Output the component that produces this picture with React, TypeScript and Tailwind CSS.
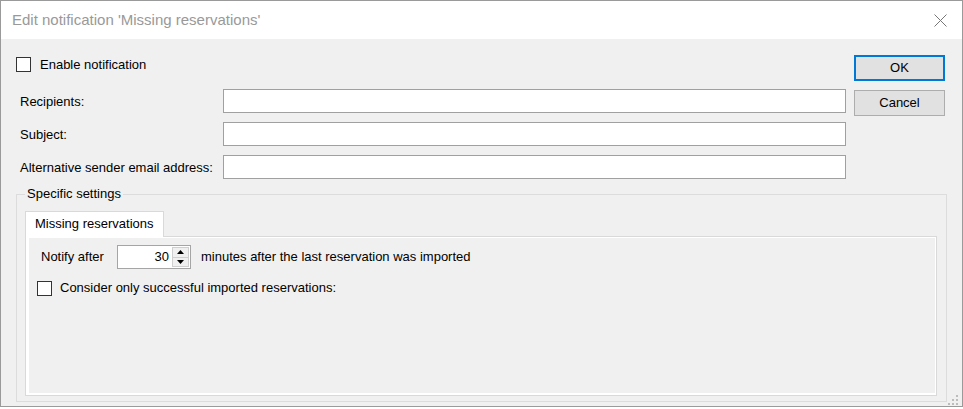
import React from 'react'

function CheckBox() {
  return <div className="w-[15px] h-[15px] border border-[#333333] bg-white shrink-0" />
}

function SpinBox({ value }: { value: number }) {
  return (
    <div className="w-[74px] h-[24px] border border-[#a5a5a5] bg-white flex items-stretch">
      <div className="flex-1 flex items-center justify-end pr-[3px] text-black">{value}</div>
      <div className="w-[18px] flex flex-col py-[1px] pr-[1px]">
        <div className="flex-1 border border-[#cfcfcf] bg-[#f0f0f0] flex items-center justify-center">
          <svg width="7" height="4" viewBox="0 0 7 4"><path d="M3.5 0 L7 4 L0 4 Z" fill="#000" /></svg>
        </div>
        <div className="flex-1 border border-t-0 border-[#cfcfcf] bg-[#f0f0f0] flex items-center justify-center">
          <svg width="7" height="4" viewBox="0 0 7 4"><path d="M0 0 L7 0 L3.5 4 Z" fill="#000" /></svg>
        </div>
      </div>
    </div>
  )
}

export default function App() {
  const fields = ['Recipients:', 'Subject:', 'Alternative sender email address:']

  return (
    <div className="w-[963px] h-[409px] bg-white text-[13px] leading-[16px] text-black font-['Liberation_Sans',Arial,sans-serif]">
      <div className="relative h-[407px] border border-[#9a9a9a] flex flex-col">
        {/* title bar */}
        <div className="h-[38px] bg-white flex items-center justify-between pl-[11px] pr-[15px]">
          <span className="text-[15px] text-[#999999]">Edit notification 'Missing reservations'</span>
          <svg width="13" height="13" viewBox="0 0 13 13">
            <path d="M0.5 0.5 L12.5 12.5 M12.5 0.5 L0.5 12.5" stroke="#777" strokeWidth="1" />
          </svg>
        </div>

        <div className="flex-1 bg-[#f0f0f0] px-[15px] pt-[16px] flex flex-col">
          <div className="flex">
            <div className="w-[830px] flex flex-col">
              <div className="mt-[1px] h-[16px] flex items-center gap-[9px]">
                <CheckBox />
                <span className="pt-[1px]">Enable notification</span>
              </div>
              <div className="mt-[17px] flex flex-col gap-[9px]">
                {fields.map((f) => (
                  <div key={f} className="h-[24px] flex items-center">
                    <label className="w-[207px] pl-[4px] pt-[1px]">{f}</label>
                    <input className="flex-1 h-[24px] border border-[#a0a0a0] bg-white outline-none" />
                  </div>
                ))}
              </div>
            </div>
            <div className="ml-[8px] w-[91px] flex flex-col gap-[9px]">
              <button className="h-[26px] border-2 border-[#0078d7] bg-[#e1e1e1]">OK</button>
              <button className="h-[26px] border border-[#adadad] bg-[#e1e1e1]">Cancel</button>
            </div>
          </div>

          {/* group box */}
          <fieldset className="mt-[7px] border border-[#dcdcdc] pl-[8px] pr-[9px] pt-[9px] pb-[5px]">
            <legend className="px-[2px] leading-[16px]">Specific settings</legend>
            <div className="relative z-10 -mb-[1px] w-fit h-[26px] border border-b-0 border-[#d9d9d9] bg-white px-[9px] flex items-center">
              <span className="-mt-[2px]">Missing reservations</span>
            </div>
            <div className="h-[160px] border border-[#d9d9d9] bg-white pt-[1px] pl-[3px] pr-[1px] pb-[2px] flex">
              <div className="flex-1 bg-[#f0f0f0] pl-[8px] pt-[7px]">
                <div className="h-[24px] flex items-center">
                  <span className="ml-[4px] w-[76px]">Notify after</span>
                  <SpinBox value={30} />
                  <span className="ml-[10px]">minutes after the last reservation was imported</span>
                </div>
                <div className="mt-[11px] h-[16px] flex items-center gap-[8px]">
                  <CheckBox />
                  <span>Consider only successful imported reservations:</span>
                </div>
              </div>
            </div>
          </fieldset>
        </div>

        {/* size grip */}
        <svg className="absolute right-[4px] bottom-[1px]" width="10" height="10" viewBox="0 0 10 10">
          <rect x="8" y="0" width="2" height="2" fill="#bcbcbc" />
          <rect x="4" y="4" width="2" height="2" fill="#bcbcbc" />
          <rect x="8" y="4" width="2" height="2" fill="#bcbcbc" />
          <rect x="0" y="8" width="2" height="2" fill="#bcbcbc" />
          <rect x="4" y="8" width="2" height="2" fill="#bcbcbc" />
          <rect x="8" y="8" width="2" height="2" fill="#bcbcbc" />
        </svg>
      </div>
    </div>
  )
}
